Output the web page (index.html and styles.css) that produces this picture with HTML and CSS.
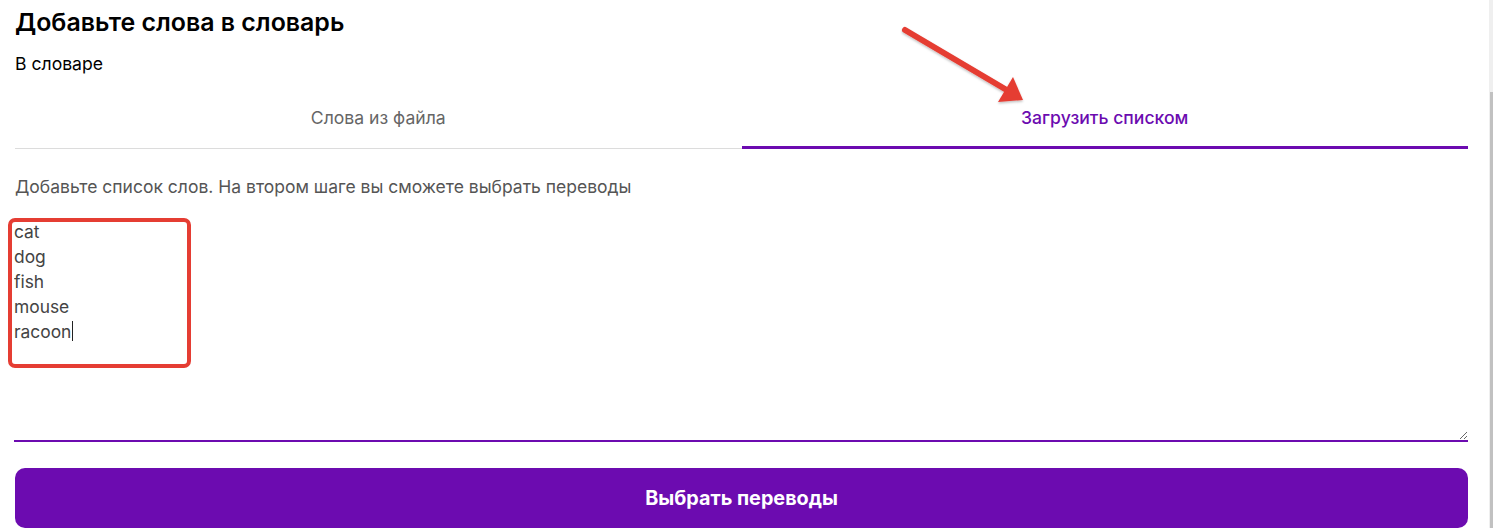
FILE: index.html
```html
<!DOCTYPE html>
<html>

<head>
    <meta charset="utf-8">
    <title>Добавьте слова в словарь</title>
    <link rel="stylesheet" href="styles.css">
</head>

<body>
    <div class="page">
        <div class="dialog">
            <h2 class="dialog-title">Добавьте слова в словарь</h2>
            <div class="dict-name">В словаре</div>

            <div class="tabs">
                <div class="tab">Слова из файла</div>
                <div class="tab tab-active">Загрузить списком</div>
            </div>

            <p class="hint">Добавьте список слов. На втором шаге вы сможете выбрать переводы</p>

            <div class="words-box">
                <textarea class="words" spellcheck="false">cat
dog
fish
mouse
racoon</textarea>
                <span class="caret"></span>
            </div>

            <button class="submit" type="button">Выбрать переводы</button>

            <!-- пометки со скриншота -->
            <div class="mark-box"></div>
            <svg class="mark-arrow" width="160" height="110" viewBox="0 0 160 110">
                <defs>
                    <filter id="shadow" x="-20%" y="-20%" width="140%" height="140%">
                        <feDropShadow dx="0" dy="1.5" stdDeviation="1" flood-color="#000" flood-opacity="0.25"/>
                    </filter>
                </defs>
                <g filter="url(#shadow)" fill="#e53d33">
                    <line x1="10" y1="10" x2="110" y2="69" stroke="#e53d33" stroke-width="6" stroke-linecap="round"/>
                    <polygon points="118,57 103,82 128,80"/>
                </g>
            </svg>
        </div>
        <div class="scroll">
            <div class="scroll-thumb"></div>
        </div>
    </div>
</body>

</html>
```

FILE: styles.css
```css
html, body {
    margin: 0;
    padding: 0;
    background: #fff;
}

body {
    font-family: Inter, "Noto Sans", sans-serif;
    color: #111;
}

.page {
    display: flex;
    height: 528px;
    overflow: hidden;
}

.dialog {
    position: relative;
    flex: 1;
    padding: 8px 21px 0 15px;
}

.dialog-title {
    margin: 0;
    font-size: 24.9px;
    font-weight: 600;
    line-height: 28px;
    color: #000;
}

.dict-name {
    margin-top: 16px;
    font-size: 17.6px;
    line-height: 24px;
    color: #000;
}

.tabs {
    display: flex;
    margin-top: 12px;
    border-bottom: 1px solid #dcdcdc;
}

.tab {
    flex: 1;
    text-align: center;
    font-size: 17.6px;
    line-height: 24px;
    padding: 18px 0 16px;
    color: #666;
    border-bottom: 3px solid transparent;
    margin-bottom: -1px;
}

.tab-active {
    color: #6c0bb0;
    font-weight: 500;
    border-bottom-color: #6c0bb0;
}

.hint {
    margin: 26px 0 0;
    font-size: 17.5px;
    line-height: 24px;
    color: #555;
}

.words-box {
    position: relative;
    margin-top: 20px;
    margin-left: -1px;
}

.words {
    display: block;
    box-sizing: border-box;
    width: 100%;
    height: 223px;
    margin: 0;
    padding: 0;
    border: none;
    border-bottom: 2px solid #6c0bb0;
    outline: none;
    font-family: Inter, "Noto Sans", sans-serif;
    font-size: 17.4px;
    line-height: 25px;
    color: #444;
    resize: vertical;
}

.caret {
    position: absolute;
    left: 58px;
    top: 102px;
    width: 1px;
    height: 20px;
    background: #222;
}

.submit {
    display: block;
    width: 100%;
    height: 60px;
    margin-top: 26px;
    border: none;
    border-radius: 10px;
    background: #6c0bb0;
    color: #fff;
    font-family: Inter, "Noto Sans", sans-serif;
    font-size: 19.8px;
    font-weight: 700;
}

.mark-box {
    position: absolute;
    left: 8px;
    top: 218px;
    width: 175px;
    height: 142px;
    border: 4px solid #e53d33;
    border-radius: 7px;
}

.mark-arrow {
    position: absolute;
    left: 895px;
    top: 20px;
}

.scroll {
    width: 4px;
    background: #efefef;
    padding-top: 92px;
}

.scroll-thumb {
    width: 3px;
    margin-left: 1px;
    height: 436px;
    background: #c1c1c1;
}
```
